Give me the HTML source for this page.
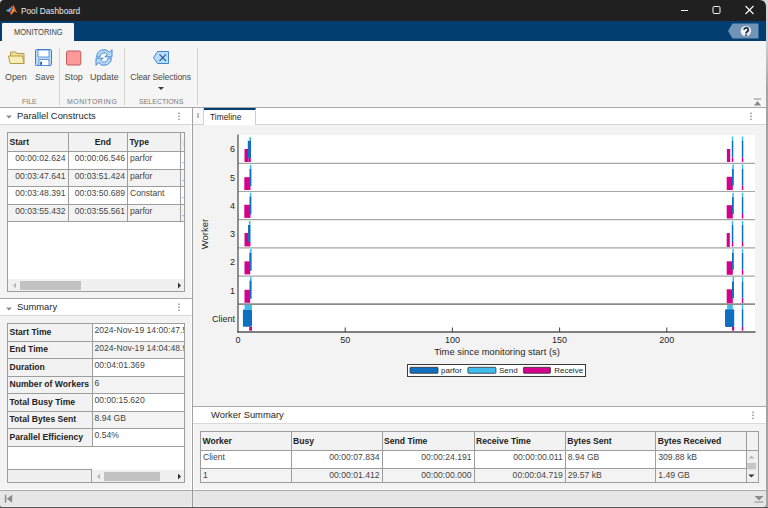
<!DOCTYPE html>
<html><head><meta charset="utf-8">
<style>
*{margin:0;padding:0;box-sizing:border-box}
body::after{content:"";position:absolute;left:0;top:507px;width:768px;height:1px;background:#555}
html,body{width:768px;height:508px;overflow:hidden;background:linear-gradient(#d6d6d6 0,#d0d0d0 40px,#a3a3a3 90px);font-family:"Liberation Sans",sans-serif;color:#262626}
.a{position:absolute}
#win{position:absolute;left:0;top:0;width:766px;height:507px;background:#f3f3f3;border-radius:4px 6px 4px 4px;overflow:hidden}
#title{left:0;top:0;width:766px;height:21px;background:#202020}
#ttext{left:21px;top:5.2px;font-size:9.4px;transform:scaleX(0.88);transform-origin:0 0;color:#ececec;white-space:nowrap}
#band{left:0;top:21px;width:766px;height:20px;background:#023e70}
#tab{left:2px;top:23px;width:72px;height:19px;background:#f5f5f5;border-radius:1px 1px 0 0}
#tabt{left:14px;top:27px;font-size:9px;color:#444;transform:scaleX(0.835);transform-origin:0 0}
#strip{left:0;top:41px;width:766px;height:67px;background:#f5f5f5;border-bottom:1px solid #a8a8a8}
.lbl{font-size:8.6px;color:#4a4a4a;white-space:nowrap}
.glbl{font-size:7px;color:#7a7a7a;white-space:nowrap}
.sep{width:1px;background:#d2d2d2}
.hdr{background:#fff;border-top:1px solid #a8a8a8;border-bottom:1px solid #d9d9d9}
.htxt{font-size:9.4px;color:#262626;white-space:nowrap}
table{border-collapse:collapse;position:absolute;table-layout:fixed}
td,th{border:1px solid #9d9d9d;font-size:8.6px;white-space:nowrap;overflow:hidden;padding:0 2px 4.4px 2px;color:#454545}
th{font-weight:bold;background:#f2f2f2;text-align:left;color:#222;padding:0 1px 2px 1.5px}
.r{text-align:right}
.ch th{padding-bottom:0}
.last td{padding-bottom:1px}
.g td{background:#f3f3f3}
.w td{background:#fff}
.tick{font-size:9px;color:#262626;white-space:nowrap}
</style></head><body>
<div id="win">
<div id="title" class="a"></div>
<svg class="a" style="left:0;top:0" width="20" height="20" viewBox="0 0 20 20">
<path d="M5.8 10.6 L9.5 8.6 L12.6 5.6 L11.4 9.4 L9.6 12.2 L7.6 11.6 Z" fill="#4ba6ee"/>
<path d="M13.4 5 L16.9 12.8 L14.6 11.2 L13 12.4 L10.8 15 Z" fill="#f19530"/>
<path d="M12.6 5.6 L13.4 5 L10.8 15 L9.6 12.2 L11.4 9.4 Z" fill="#c93c1c"/>
<path d="M13.4 5 L16.9 12.8 L14.6 11.2 Z" fill="#d9542a"/>
<path d="M10.8 15 L13 12.4 L11.8 12 Z" fill="#f7c040"/>
</svg>
<div id="ttext" class="a">Pool Dashboard</div>
<svg class="a" style="left:680px;top:5px" width="80" height="11" viewBox="0 0 80 11">
<line x1="1" y1="5.5" x2="8" y2="5.5" stroke="#fff" stroke-width="1"/>
<rect x="33" y="1.5" width="7" height="7" rx="1.2" fill="none" stroke="#fff" stroke-width="1"/>
<line x1="65.5" y1="1" x2="73.5" y2="9" stroke="#fff" stroke-width="1.1"/>
<line x1="73.5" y1="1" x2="65.5" y2="9" stroke="#fff" stroke-width="1.1"/>
</svg>
<div id="band" class="a"></div>
<div id="tab" class="a"></div>
<div id="tabt" class="a">MONITORING</div>
<svg class="a" style="left:728px;top:23px" width="32" height="17" viewBox="0 0 32 17">
<path d="M0 8 L4.5 0.5 L30.5 0.5 L30.5 15.5 L4.5 15.5 Z" fill="#6f94b8"/>
<defs><radialGradient id="hg" cx="0.4" cy="0.35" r="0.7"><stop offset="0" stop-color="#ffffff"/><stop offset="0.7" stop-color="#e8edf2"/><stop offset="1" stop-color="#aab8c6"/></radialGradient></defs><circle cx="18" cy="8.3" r="5.7" fill="url(#hg)" stroke="#557799" stroke-width="0.5"/>
<path d="M16.1 6.9 A2.1 2.1 0 1 1 19.3 8.6 Q18 9.3 18 10.4" fill="none" stroke="#1a2f4a" stroke-width="1.8"/><circle cx="18" cy="12.2" r="0.9" fill="#1a2f4a"/>
</svg>

<div id="strip" class="a"></div>
<!-- toolstrip icons -->
<svg class="a" style="left:0;top:0" width="200" height="107" viewBox="0 0 200 107">
<!-- folder -->
<path d="M10.5 63.5 L10.5 52 L16 52 L17 53.5 L24 53.5 L24 63.5 Z" fill="#eedf98" stroke="#b59c4a" stroke-width="1"/>
<path d="M8.5 56 L22.5 56 L24 63.5 L10 63.5 Z" fill="#f8eeb4" stroke="#b59c4a" stroke-width="1" stroke-linejoin="round"/>
<!-- save -->
<rect x="35.5" y="49.5" width="16" height="16" rx="1.2" fill="#bcdcf8" stroke="#3d80d4" stroke-width="1"/>
<rect x="38" y="50" width="11" height="7" fill="#fff" stroke="#3d80d4" stroke-width="0.8"/>
<rect x="39" y="59.5" width="10" height="6" fill="#fff" stroke="#3d80d4" stroke-width="0.8"/>
<rect x="40.2" y="61.8" width="1.8" height="3" fill="#1f55a0"/>
<!-- stop -->
<rect x="66.5" y="51" width="14.3" height="14" rx="1.6" fill="#fd9b9b" stroke="#c25656" stroke-width="1"/>
<!-- update -->
<path d="M96.7 57 A7.3 7.3 0 0 1 109.6 52.3 L112 49.6 L112 56.8 L104.8 56.8 L107.5 54.6 A4.3 4.3 0 0 0 99.7 57 Z" fill="#b8dbf8" stroke="#3b80d0" stroke-width="0.9" stroke-linejoin="round"/>
<path d="M111.3 58 A7.3 7.3 0 0 1 98.4 62.7 L96 65.4 L96 58.2 L103.2 58.2 L100.5 60.4 A4.3 4.3 0 0 0 108.3 58 Z" fill="#b8dbf8" stroke="#3b80d0" stroke-width="0.9" stroke-linejoin="round"/>
<!-- clear selections -->
<path d="M153.5 57.5 L157.5 51.5 L168.5 51.5 L168.5 63.5 L157.5 63.5 Z" fill="#b8dcfa" stroke="#3d85d5" stroke-width="1" stroke-linejoin="round"/>
<line x1="159.5" y1="54.3" x2="166" y2="61" stroke="#1f5aa0" stroke-width="1.1"/>
<line x1="166" y1="54.3" x2="159.5" y2="61" stroke="#1f5aa0" stroke-width="1.1"/>
<path d="M158 87 L164 87 L161 90 Z" fill="#3a3a3a"/>
</svg>
<div class="a lbl" style="left:5px;top:72px;font-size:8.9px">Open</div>
<div class="a lbl" style="left:35px;top:72px;font-size:8.5px">Save</div>
<div class="a lbl" style="left:64.5px;top:72px;font-size:8.9px">Stop</div>
<div class="a lbl" style="left:90px;top:72px;font-size:8.9px">Update</div>
<div class="a lbl" style="left:130.3px;top:72px;letter-spacing:-0.12px">Clear Selections</div>
<div class="a glbl" style="left:22px;top:98.3px">FILE</div>
<div class="a glbl" style="left:67px;top:98.3px;letter-spacing:0.5px">MONITORING</div>
<div class="a glbl" style="left:139px;top:98.3px">SELECTIONS</div>
<div class="a sep" style="left:59px;top:48px;height:57px"></div>
<div class="a sep" style="left:124px;top:48px;height:57px"></div>
<div class="a sep" style="left:197px;top:48px;height:57px"></div>
<svg class="a" style="left:753px;top:97px" width="10" height="10" viewBox="0 0 10 10">
<line x1="0.8" y1="2" x2="8.2" y2="2" stroke="#8a8a8a" stroke-width="1.1"/>
<path d="M0.8 8.6 L4.5 4 L8.2 8.6 Z" fill="#8a8a8a"/>
</svg>

<!-- LEFT PANEL -->
<div class="a" style="left:191px;top:125px;width:3px;height:365px;background:#fff"></div>
<div class="a" style="left:192px;top:108px;width:1px;height:382px;background:#a0a0a0"></div>
<div class="a hdr" style="left:0;top:108px;width:192px;height:17px;border-top:none"></div>
<svg class="a" style="left:5px;top:114px" width="8" height="6"><path d="M1 1.5 L7 1.5 L4 4.5 Z" fill="#8a8a8a"/></svg>
<div class="a htxt" style="left:17px;top:110px">Parallel Constructs</div>
<svg class="a" style="left:177px;top:112px" width="4" height="9"><circle cx="2" cy="1.2" r="0.65" fill="#444"/><circle cx="2" cy="4.2" r="0.65" fill="#444"/><circle cx="2" cy="7.2" r="0.65" fill="#444"/></svg>

<div class="a" style="left:7px;top:132px;width:178px;height:160px;background:#fff;border:1px solid #9d9d9d"></div>
<table style="left:7px;top:132px;width:177px">
<colgroup><col style="width:60.5px"><col style="width:59.5px"><col style="width:53px"><col style="width:4px"></colgroup>
<tr class="ch" style="height:19px"><th>Start</th><th class="r" style="padding-right:16px">End</th><th>Type</th><th></th></tr>
<tr class="w" style="height:18px"><td class="r">00:00:02.624</td><td class="r">00:00:06.546</td><td>parfor</td><td></td></tr>
<tr class="g" style="height:17px"><td class="r">00:03:47.641</td><td class="r">00:03:51.424</td><td>parfor</td><td></td></tr>
<tr class="w" style="height:18px"><td class="r">00:03:48.391</td><td class="r">00:03:50.689</td><td>Constant</td><td></td></tr>
<tr class="g" style="height:17px"><td class="r">00:03:55.432</td><td class="r">00:03:55.561</td><td>parfor</td><td></td></tr>
</table>
<svg class="a" style="left:182px;top:140px" width="3" height="80"><rect x="0.6" y="1" width="0.8" height="5" fill="#e6dc9a"/><rect x="0.5" y="22" width="1" height="1.2" fill="#5b9bd5"/><rect x="0.5" y="40" width="1" height="1.2" fill="#5b9bd5"/><rect x="0.5" y="57" width="1" height="1.2" fill="#5b9bd5"/><rect x="0.5" y="75" width="1" height="1.2" fill="#5b9bd5"/></svg>
<!-- hscroll -->
<div class="a" style="left:8px;top:279px;width:176px;height:12px;background:#f0f0f0"></div>
<div class="a" style="left:20px;top:281px;width:61px;height:9px;background:#c2c2c2"></div>
<svg class="a" style="left:10px;top:281px" width="174" height="9"><path d="M3 4.5 L6 1.5 L6 7.5 Z" fill="#b8b8b8"/><path d="M171 4.5 L168 1.5 L168 7.5 Z" fill="#333"/></svg>

<div class="a" style="left:0;top:298px;width:192px;height:1px;background:#a8a8a8"></div>
<div class="a hdr" style="left:0;top:299px;width:192px;height:17px;border-top:none"></div>
<svg class="a" style="left:5px;top:305.5px" width="8" height="6"><path d="M1 1.5 L7 1.5 L4 4.5 Z" fill="#8a8a8a"/></svg>
<div class="a htxt" style="left:17px;top:300.6px">Summary</div>
<svg class="a" style="left:177px;top:303px" width="4" height="9"><circle cx="2" cy="1.2" r="0.65" fill="#444"/><circle cx="2" cy="4.2" r="0.65" fill="#444"/><circle cx="2" cy="7.2" r="0.65" fill="#444"/></svg>

<div class="a" style="left:7px;top:323px;width:178px;height:160px;background:#fff;border:1px solid #9d9d9d"></div>
<table style="left:7px;top:323px;width:177px">
<colgroup><col style="width:84.5px"><col style="width:92.5px"></colgroup>
<tr class="w" style="height:18px"><th>Start Time</th><td>2024-Nov-19 14:00:47.5</td></tr>
<tr class="g" style="height:17px"><th>End Time</th><td>2024-Nov-19 14:04:48.9</td></tr>
<tr class="w" style="height:18px"><th>Duration</th><td>00:04:01.369</td></tr>
<tr class="g" style="height:17px"><th>Number of Workers</th><td>6</td></tr>
<tr class="w" style="height:18px"><th>Total Busy Time</th><td>00:00:15.620</td></tr>
<tr class="g" style="height:17px"><th>Total Bytes Sent</th><td>8.94 GB</td></tr>
<tr class="w" style="height:18px"><th>Parallel Efficiency</th><td>0.54%</td></tr>
</table>
<div class="a" style="left:8px;top:469px;width:84px;height:13px;background:#f0f0f0;border-top:1px solid #9d9d9d;border-right:1px solid #9d9d9d"></div>
<div class="a" style="left:92px;top:470px;width:92px;height:12px;background:#f0f0f0"></div>
<div class="a" style="left:104px;top:472px;width:56px;height:9px;background:#c2c2c2"></div>
<svg class="a" style="left:94px;top:472px" width="90" height="9"><path d="M3 4.5 L6 1.5 L6 7.5 Z" fill="#b8b8b8"/><path d="M87 4.5 L84 1.5 L84 7.5 Z" fill="#333"/></svg>

<!-- RIGHT PANEL -->
<div class="a" style="left:193px;top:108px;width:573px;height:17px;background:#fff;border-bottom:1px solid #d6d6d6"></div>
<div class="a" style="left:193px;top:108px;width:11px;height:17px;background:#fafafa;border-right:1px solid #d0d0d0;border-bottom:1px solid #d0d0d0;border-radius:0 0 2px 0"></div>
<div class="a" style="left:197px;top:113px;width:2px;height:5px;background:#bbb"></div>
<div class="a" style="left:204px;top:108px;width:52px;height:17px;background:#fff;border-right:1px solid #d0d0d0;border-top:2px solid #023e70"></div>
<div class="a" style="left:210px;top:112px;font-size:8.4px;color:#262626">Timeline</div>
<svg class="a" style="left:749px;top:112px" width="4" height="9"><circle cx="2" cy="1.2" r="0.65" fill="#444"/><circle cx="2" cy="4.2" r="0.65" fill="#444"/><circle cx="2" cy="7.2" r="0.65" fill="#444"/></svg>

<svg id="plot" class="a" style="left:193px;top:125px" width="573" height="281" viewBox="193 125 573 281">
<rect x="193" y="125" width="573" height="281" fill="#f3f3f3"/>
<rect x="238" y="135" width="517" height="197" fill="#fff"/>
<line x1="238" y1="163.3" x2="755" y2="163.3" stroke="#a6a6a6" stroke-width="1.2"/>
<line x1="238" y1="191.5" x2="755" y2="191.5" stroke="#a6a6a6" stroke-width="1.2"/>
<line x1="238" y1="219.7" x2="755" y2="219.7" stroke="#a6a6a6" stroke-width="1.2"/>
<line x1="238" y1="247.9" x2="755" y2="247.9" stroke="#a6a6a6" stroke-width="1.2"/>
<line x1="238" y1="276.2" x2="755" y2="276.2" stroke="#a6a6a6" stroke-width="1.2"/>
<line x1="238" y1="304.2" x2="755" y2="304.2" stroke="#8c8c8c" stroke-width="1.8"/>
<rect x="244.5" y="149" width="3.90" height="13.00" fill="#d4008c" rx="0"/>
<rect x="248.4" y="158" width="2.40" height="4.00" fill="#d4008c" rx="0"/>
<rect x="249.4" y="137.1" width="1.60" height="3.60" fill="#3fbdee" rx="0"/>
<rect x="247.8" y="140.7" width="3.20" height="17.30" fill="#0f6fc0" rx="0"/>
<rect x="244.3" y="177.2" width="6.20" height="12.80" fill="#d4008c" rx="0"/>
<rect x="249.8" y="164.8" width="1.60" height="4.20" fill="#3fbdee" rx="0"/>
<rect x="249.5" y="169" width="1.90" height="17.20" fill="#0f6fc0" rx="0"/>
<rect x="244.3" y="204.8" width="6.20" height="13.10" fill="#d4008c" rx="0"/>
<rect x="249.8" y="192.8" width="1.60" height="3.70" fill="#3fbdee" rx="0"/>
<rect x="249.5" y="196.5" width="1.90" height="17.90" fill="#0f6fc0" rx="0"/>
<rect x="244.5" y="233" width="3.90" height="13.40" fill="#d4008c" rx="0"/>
<rect x="248" y="242" width="2.50" height="4.40" fill="#d4008c" rx="0"/>
<rect x="248.9" y="221" width="1.60" height="4.00" fill="#3fbdee" rx="0"/>
<rect x="248" y="225" width="2.50" height="17.00" fill="#0f6fc0" rx="0"/>
<rect x="244.5" y="261.4" width="5.70" height="13.00" fill="#d4008c" rx="0"/>
<rect x="250.0" y="249" width="1.60" height="3.60" fill="#3fbdee" rx="0"/>
<rect x="249.3" y="252.6" width="2.30" height="18.20" fill="#0f6fc0" rx="0"/>
<rect x="244.5" y="289.8" width="5.70" height="13.00" fill="#d4008c" rx="0"/>
<rect x="250.0" y="277" width="1.60" height="3.40" fill="#3fbdee" rx="0"/>
<rect x="249.5" y="280.4" width="2.10" height="18.30" fill="#0f6fc0" rx="0"/>
<rect x="244.5" y="305" width="7.50" height="4.40" fill="#3fbdee" rx="0"/>
<rect x="242.9" y="309.4" width="9.10" height="17.40" fill="#0f6fc0" rx="1"/>
<rect x="249.2" y="326.8" width="2.80" height="3.90" fill="#d4008c" rx="0"/>
<rect x="726.9" y="149" width="3.30" height="13.00" fill="#d4008c" rx="0"/>
<rect x="731.8" y="136.5" width="1.50" height="4.50" fill="#3fbdee" rx="0"/>
<rect x="731.8" y="141" width="1.50" height="16.80" fill="#0f6fc0" rx="0"/>
<rect x="731.8" y="157.8" width="1.50" height="4.20" fill="#d4008c" rx="0"/>
<rect x="741.8" y="136.5" width="1.50" height="4.50" fill="#3fbdee" rx="0"/>
<rect x="741.8" y="141" width="1.50" height="16.80" fill="#0f6fc0" rx="0"/>
<rect x="741.8" y="157.8" width="1.50" height="4.20" fill="#d4008c" rx="0"/>
<rect x="726.7" y="176.8" width="6.10" height="13.30" fill="#d4008c" rx="0"/>
<rect x="732.3" y="164.5" width="1.50" height="4.40" fill="#3fbdee" rx="0"/>
<rect x="732" y="168.9" width="1.80" height="16.80" fill="#0f6fc0" rx="0"/>
<rect x="741.8" y="164.5" width="1.50" height="4.40" fill="#3fbdee" rx="0"/>
<rect x="741.8" y="168.9" width="1.50" height="16.80" fill="#0f6fc0" rx="0"/>
<rect x="741.8" y="185.7" width="1.50" height="4.30" fill="#d4008c" rx="0"/>
<rect x="726.7" y="205.2" width="6.10" height="13.30" fill="#d4008c" rx="0"/>
<rect x="732.3" y="192.8" width="1.50" height="4.40" fill="#3fbdee" rx="0"/>
<rect x="732" y="197.2" width="1.80" height="16.80" fill="#0f6fc0" rx="0"/>
<rect x="741.8" y="192.8" width="1.50" height="4.40" fill="#3fbdee" rx="0"/>
<rect x="741.8" y="197.2" width="1.50" height="16.80" fill="#0f6fc0" rx="0"/>
<rect x="741.8" y="214" width="1.50" height="4.50" fill="#d4008c" rx="0"/>
<rect x="726.7" y="233" width="3.10" height="13.90" fill="#d4008c" rx="0"/>
<rect x="731.8" y="221" width="1.50" height="4.00" fill="#3fbdee" rx="0"/>
<rect x="731.8" y="225" width="1.50" height="17.00" fill="#0f6fc0" rx="0"/>
<rect x="731.8" y="242" width="1.50" height="4.50" fill="#d4008c" rx="0"/>
<rect x="741.8" y="221" width="1.50" height="4.00" fill="#3fbdee" rx="0"/>
<rect x="741.8" y="225" width="1.50" height="17.00" fill="#0f6fc0" rx="0"/>
<rect x="741.8" y="242" width="1.50" height="4.50" fill="#d4008c" rx="0"/>
<rect x="726.7" y="261.3" width="6.10" height="13.50" fill="#d4008c" rx="0"/>
<rect x="732.3" y="249" width="1.50" height="4.00" fill="#3fbdee" rx="0"/>
<rect x="732" y="253" width="1.80" height="16.80" fill="#0f6fc0" rx="0"/>
<rect x="741.8" y="249" width="1.50" height="4.00" fill="#3fbdee" rx="0"/>
<rect x="741.8" y="253" width="1.50" height="16.80" fill="#0f6fc0" rx="0"/>
<rect x="741.8" y="269.8" width="1.50" height="5.00" fill="#d4008c" rx="0"/>
<rect x="726.7" y="289.3" width="6.10" height="13.90" fill="#d4008c" rx="0"/>
<rect x="732.5" y="277" width="1.50" height="4.30" fill="#3fbdee" rx="0"/>
<rect x="732" y="281.3" width="2.00" height="16.90" fill="#0f6fc0" rx="0"/>
<rect x="741.8" y="277" width="1.50" height="4.30" fill="#3fbdee" rx="0"/>
<rect x="741.8" y="281.3" width="1.50" height="16.90" fill="#0f6fc0" rx="0"/>
<rect x="741.8" y="298.2" width="1.50" height="4.80" fill="#d4008c" rx="0"/>
<rect x="727.1" y="305" width="5.70" height="4.20" fill="#3fbdee" rx="0"/>
<rect x="725" y="309.2" width="9.20" height="17.70" fill="#0f6fc0" rx="1"/>
<rect x="732" y="326.9" width="2.20" height="3.80" fill="#d4008c" rx="0"/>
<rect x="741.8" y="305" width="1.50" height="4.20" fill="#3fbdee" rx="0"/>
<rect x="741.8" y="309.2" width="1.50" height="17.70" fill="#0f6fc0" rx="0"/>
<rect x="741.8" y="326.9" width="1.50" height="3.80" fill="#d4008c" rx="0"/>
<line x1="238" y1="134.5" x2="238" y2="332.5" stroke="#555" stroke-width="1.3"/>
<line x1="237.2" y1="332" x2="755.5" y2="332" stroke="#555" stroke-width="1.3"/>
<text x="238.0" y="343" font-size="9" text-anchor="middle" fill="#262626" font-family="Liberation Sans">0</text>
<line x1="345.2" y1="327.5" x2="345.2" y2="332" stroke="#404040" stroke-width="1"/>
<text x="345.2" y="343" font-size="9" text-anchor="middle" fill="#262626" font-family="Liberation Sans">50</text>
<line x1="452.4" y1="327.5" x2="452.4" y2="332" stroke="#404040" stroke-width="1"/>
<text x="452.4" y="343" font-size="9" text-anchor="middle" fill="#262626" font-family="Liberation Sans">100</text>
<line x1="559.6" y1="327.5" x2="559.6" y2="332" stroke="#404040" stroke-width="1"/>
<text x="559.6" y="343" font-size="9" text-anchor="middle" fill="#262626" font-family="Liberation Sans">150</text>
<line x1="666.8" y1="327.5" x2="666.8" y2="332" stroke="#404040" stroke-width="1"/>
<text x="666.8" y="343" font-size="9" text-anchor="middle" fill="#262626" font-family="Liberation Sans">200</text>
<text x="235" y="152.3" font-size="9" text-anchor="end" fill="#262626" font-family="Liberation Sans">6</text>
<text x="235" y="180.6" font-size="9" text-anchor="end" fill="#262626" font-family="Liberation Sans">5</text>
<text x="235" y="208.8" font-size="9" text-anchor="end" fill="#262626" font-family="Liberation Sans">4</text>
<text x="235" y="237.0" font-size="9" text-anchor="end" fill="#262626" font-family="Liberation Sans">3</text>
<text x="235" y="265.2" font-size="9" text-anchor="end" fill="#262626" font-family="Liberation Sans">2</text>
<text x="235" y="293.5" font-size="9" text-anchor="end" fill="#262626" font-family="Liberation Sans">1</text>
<text x="235" y="321.5" font-size="9" text-anchor="end" fill="#262626" font-family="Liberation Sans">Client</text>
<text transform="translate(207.7,234) rotate(-90)" x="0" y="0" font-size="9.5" text-anchor="middle" fill="#262626" font-family="Liberation Sans">Worker</text>
<text x="497" y="355.3" font-size="9.4" text-anchor="middle" fill="#262626" font-family="Liberation Sans">Time since monitoring start (s)</text>
<rect x="407.5" y="364.5" width="178" height="12" fill="#fff" stroke="#3a3a3a" stroke-width="1"/>
<rect x="410.0" y="367.3" width="28.0" height="6" fill="#0f6fc0" stroke="#333" stroke-width="0.8" rx="0.8"/>
<text x="441" y="373" font-size="8" fill="#262626" font-family="Liberation Sans">parfor</text>
<rect x="467.9" y="367.3" width="28.0" height="6" fill="#3fbdee" stroke="#333" stroke-width="0.8" rx="0.8"/>
<text x="499" y="373" font-size="8" fill="#262626" font-family="Liberation Sans">Send</text>
<rect x="523.4" y="367.3" width="27.100000000000023" height="6" fill="#d4008c" stroke="#333" stroke-width="0.8" rx="0.8"/>
<text x="554.2" y="373" font-size="8" fill="#262626" font-family="Liberation Sans">Receive</text>
</svg>

<!-- worker summary -->
<div class="a" style="left:193px;top:406px;width:573px;height:1px;background:#a8a8a8"></div>
<div class="a hdr" style="left:193px;top:407px;width:573px;height:17px;border-top:none"></div>
<div class="a htxt" style="left:211px;top:409.4px">Worker Summary</div>
<svg class="a" style="left:751px;top:411px" width="4" height="9"><circle cx="2" cy="1.2" r="0.65" fill="#444"/><circle cx="2" cy="4.2" r="0.65" fill="#444"/><circle cx="2" cy="7.2" r="0.65" fill="#444"/></svg>
<table style="left:200px;top:431px;width:558px">
<colgroup><col style="width:90.5px"><col style="width:91px"><col style="width:92px"><col style="width:91.3px"><col style="width:90.5px"><col style="width:91.2px"><col style="width:11.5px"></colgroup>
<tr class="ch" style="height:19px"><th>Worker</th><th>Busy</th><th>Send Time</th><th>Receive Time</th><th>Bytes Sent</th><th>Bytes Received</th><th></th></tr>
<tr class="w" style="height:18px"><td>Client</td><td class="r">00:00:07.834</td><td class="r">00:00:24.191</td><td class="r">00:00:00.011</td><td>8.94 GB</td><td>309.88 kB</td><td style="background:#f0f0f0"></td></tr>
<tr class="g last" style="height:14px"><td>1</td><td class="r">00:00:01.412</td><td class="r">00:00:00.000</td><td class="r">00:00:04.719</td><td>29.57 kB</td><td>1.49 GB</td><td style="background:#f0f0f0"></td></tr>
</table>

<div class="a" style="left:747px;top:451px;width:11px;height:31px;background:#f0f0f0"></div>
<svg class="a" style="left:747px;top:451px" width="11" height="31"><path d="M1.3 7.5 L4.4 4.5 L7.5 7.5 Z" fill="#b9b9b9"/><rect x="0.2" y="11.9" width="8.9" height="6.5" fill="#c6c6c6"/><path d="M1.3 23.5 L7.5 23.5 L4.4 26.4 Z" fill="#333"/></svg>
<!-- status bar -->
<div class="a" style="left:0;top:489px;width:766px;height:1px;background:#fff"></div>
<div class="a" style="left:0;top:490px;width:766px;height:17px;background:#e6e6e6;border-top:1px solid #a8a8a8;border-bottom:1px solid #f0f0f0"></div>
<div class="a" style="left:191px;top:491px;width:3px;height:15px;background:#ececec"></div><div class="a" style="left:192px;top:489px;width:1px;height:18px;background:#9a9a9a"></div>
<svg class="a" style="left:4px;top:494px" width="9" height="9"><rect x="0.8" y="0.7" width="1.5" height="8" fill="#8a8a8a"/><path d="M8.2 0.7 L8.2 8.7 L2.8 4.7 Z" fill="#8a8a8a"/></svg>
<svg class="a" style="left:754px;top:495px" width="10" height="9"><path d="M0.5 1 L9.5 1 L5 5.5 Z" fill="#8c8c8c"/><line x1="0.5" y1="7" x2="9.5" y2="7" stroke="#8c8c8c" stroke-width="1"/></svg>
</div>
</body></html>
